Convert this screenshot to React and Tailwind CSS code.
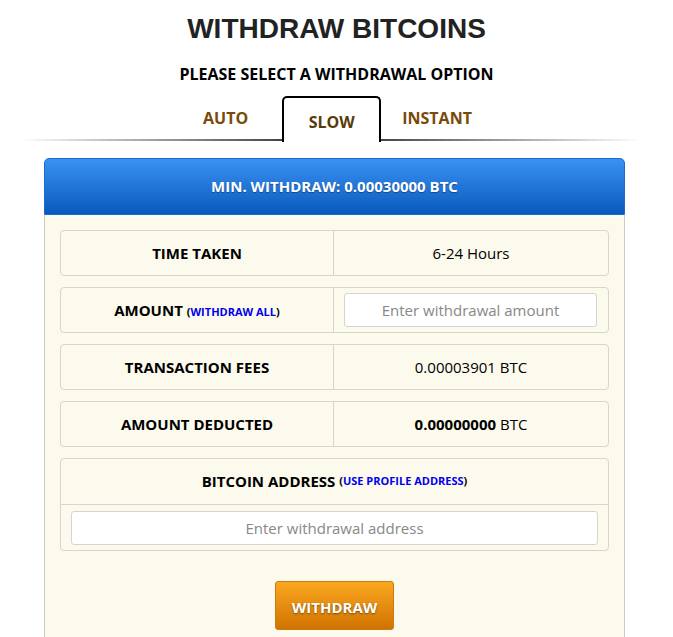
import React from "react";

const rowCls =
  "flex h-[46px] rounded-[4px] border border-[#d9d6c6] text-[15px] text-black";

function Row({ label, children }) {
  return (
    <div className={rowCls}>
      <div className="flex w-[273px] items-center justify-center border-r border-[#d9d6c6] font-bold">
        {label}
      </div>
      <div className="flex flex-1 items-center justify-center">{children}</div>
    </div>
  );
}

export default function App() {
  return (
    <div className="w-[673px] bg-white pb-10 font-['Open_Sans',sans-serif]">
      <h1 className="pt-[14px] text-center font-['Liberation_Sans',Arial,sans-serif] text-[28px] font-bold leading-[30px] text-[#222]">
        WITHDRAW BITCOINS
      </h1>
      <h2 className="mt-[20px] text-center text-[16px] font-bold leading-[20px] text-black">
        PLEASE SELECT A WITHDRAWAL OPTION
      </h2>

      <div className="relative mt-[12px] flex items-end justify-center pl-[2px]">
        <div className="mr-[34px] pb-[11px] text-[16px] font-bold text-[#7a4a08]">AUTO</div>
        <div className="relative z-10 -mb-[1px] flex h-[46px] w-[99px] items-center justify-center rounded-t-[5px] border-2 border-b-0 border-black bg-white pt-[3px] text-[16px] font-bold text-[#5a3a0a]">
          SLOW
        </div>
        <div className="ml-[21px] pb-[11px] text-[16px] font-bold text-[#7a4a08]">INSTANT</div>
        <div className="absolute bottom-0 left-[20px] right-[33px] h-[2px] bg-gradient-to-r from-transparent via-[#222] to-transparent" />
      </div>

      <div className="ml-[44px] mt-[17px] w-[581px]">
        <div className="flex h-[57px] items-center justify-center rounded-t-[5px] border border-[#1c6bd0] bg-gradient-to-b from-[#3a92f2] to-[#0659bd] text-[15px] font-bold text-white [text-shadow:0_1px_1px_rgba(0,0,0,0.35)]">
          MIN. WITHDRAW: 0.00030000 BTC
        </div>
        <div className="flex flex-col gap-[11px] border-x border-[#cfcdc2] bg-[#fcfaec] px-[15px] pt-[15px] pb-[7px]">
          <Row label="TIME TAKEN">6-24 Hours</Row>
          <Row
            label={
              <span>
                AMOUNT{" "}
                <span className="text-[11px]">
                  (<span className="text-[#0000ee]">WITHDRAW ALL</span>)
                </span>
              </span>
            }
          >
            <input
              placeholder="Enter withdrawal amount"
              className="ml-[10px] mr-[11px] h-[34px] w-full rounded-[3px] border border-[#d4d4d4] bg-white text-center text-[15px] text-black outline-none placeholder:text-[#888]"
            />
          </Row>
          <Row label="TRANSACTION FEES">0.00003901 BTC</Row>
          <Row label="AMOUNT DEDUCTED">
            <span>
              <b>0.00000000</b> BTC
            </span>
          </Row>
          <div className="rounded-[4px] border border-[#d9d6c6] text-[15px]">
            <div className="flex h-[46px] items-center justify-center border-b border-[#d9d6c6] font-bold text-black">
              BITCOIN ADDRESS&nbsp;
              <span className="text-[11px]">
                (<span className="text-[#0000ee]">USE PROFILE ADDRESS</span>)
              </span>
            </div>
            <div className="px-[10px] pt-[6px] pb-[5px]">
              <input
                placeholder="Enter withdrawal address"
                className="h-[34px] w-full rounded-[3px] border border-[#d4d4d4] bg-white text-center text-[15px] text-black outline-none placeholder:text-[#888]"
              />
            </div>
          </div>
          <div className="flex justify-center pt-[19px] pb-[10px]">
            <button className="h-[49px] w-[119px] rounded-[3px] border border-[#c97a10] bg-gradient-to-b from-[#fba81f] to-[#d07300] pt-[3px] text-[15px] font-bold text-white [text-shadow:0_1px_2px_rgba(0,0,0,0.45)]">
              WITHDRAW
            </button>
          </div>
        </div>
      </div>
    </div>
  );
}
